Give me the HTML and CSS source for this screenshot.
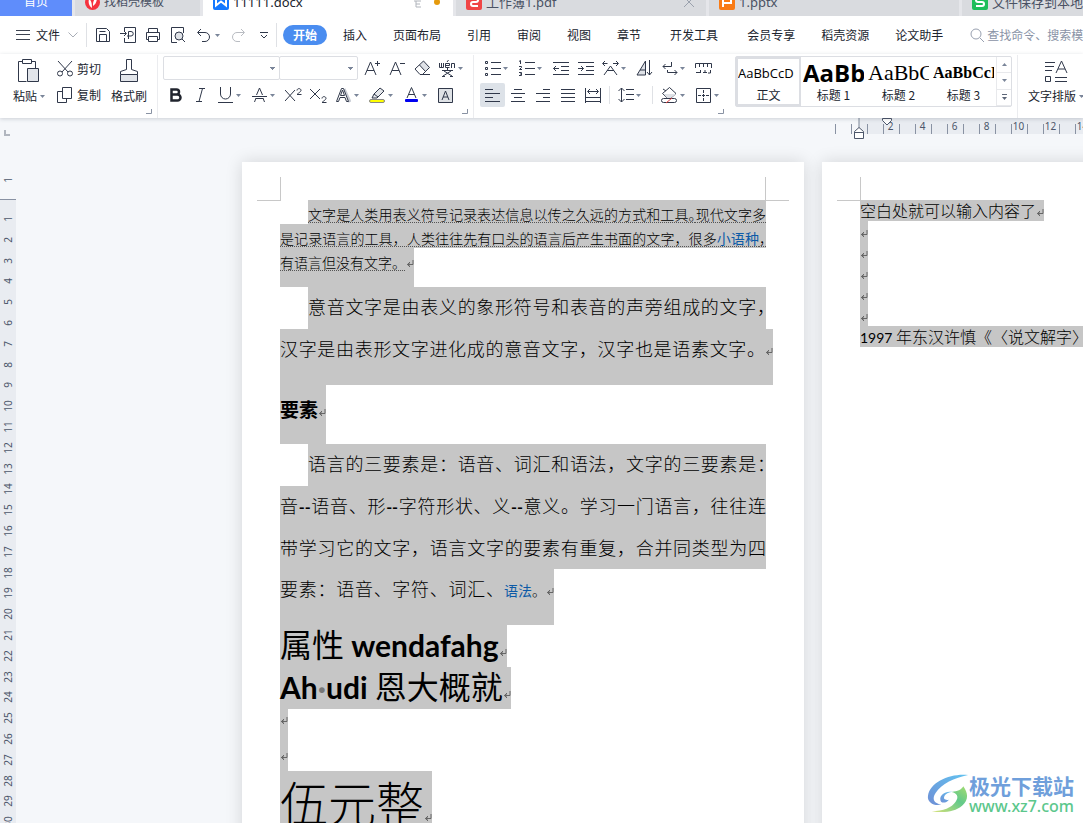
FILE: index.html
```html
<!DOCTYPE html>
<html lang="zh-CN">
<head>
<meta charset="utf-8">
<title>11111.docx</title>
<link rel="stylesheet" href="styles.css">
</head>
<body>
<svg class="defs" aria-hidden="true">
  <symbol id="ret" viewBox="0 0 8 8"><path d="M7 0v4.500H1.500M4 2 1.500 4.500 4 7" fill="none" stroke="#666" stroke-width="1"/><path d="M1 4.500 3.500 2.500v4z" fill="#666"/></symbol>
  <symbol id="caret" viewBox="0 0 5 3"><path d="M0 0h5L2.500 3z" fill="#7a8599"/></symbol>
</svg>

<nav class="tabs" aria-label="文档标签">
  <button class="tab tab-home">首页</button>
  <button class="tab tab-store"><svg width="15" height="15" viewBox="0 0 15 15"><circle cx="7.500" cy="7.500" r="7.500" fill="#f5333f"/><path d="M4 4c2 1 3 4 3 9-3-2-4-5-3-9zM12 2c-3 2-4 4-4 9 3-2 4-5 4-9z" fill="#fff"/></svg>找稻壳模板</button>
  <button class="tab tab-active"><svg width="16" height="16" viewBox="0 0 16 16"><rect width="16" height="16" rx="2" fill="#1478ff"/><path d="M3 4v7.500l5-4 5 4V4" stroke="#fff" stroke-width="2" fill="none"/></svg>11111.docx<svg class="pin" width="8" height="12" viewBox="0 0 8 12"><path d="M0 5h7M2 5v6h5M2 8h4" fill="none" stroke="#b0b4bb"/></svg><i class="dot"></i></button>
  <button class="tab"><svg width="16" height="16" viewBox="0 0 16 16"><rect width="16" height="16" rx="2" fill="#f04545"/><path d="M4 4h6a2 2 0 0 1 0 4H7a2 2 0 0 0 0 4h5" stroke="#fff" stroke-width="2" fill="none"/></svg>工作簿1.pdf<svg class="close" width="10" height="10" viewBox="0 0 10 10"><path d="m0 0 10 10M10 0 0 10" stroke="#9aa1ad"/></svg></button>
  <button class="tab"><svg width="16" height="16" viewBox="0 0 16 16"><rect width="16" height="16" rx="2" fill="#f97b16"/><path d="M4 13V5h8v4H5" stroke="#fff" stroke-width="2" fill="none"/></svg>1.pptx</button>
  <button class="tab"><svg width="16" height="16" viewBox="0 0 16 16"><rect width="16" height="16" rx="2" fill="#1ebe5a"/><path d="M12 4H6a2 2 0 0 0 0 4h4a2 2 0 0 1 0 4H4" stroke="#fff" stroke-width="2" fill="none"/></svg>文件保存到本地.xlsx</button>
</nav>

<header class="menu">
  <button class="file"><svg width="14" height="10" viewBox="0 0 14 10"><path d="M0 .5h14M0 4.500h14M0 9.500h14" stroke="#3c4250"/></svg>文件<svg width="10" height="6" viewBox="0 0 10 6"><path d="m.5.5 4.500 4.500L9.500.5" fill="none" stroke="#a8adb6"/></svg></button>
  <div class="quick">
    <button aria-label="保存"><svg width="16" height="16" viewBox="0 0 16 16"><path d="M1.500 1.500h10l3 3v10h-13zM4.500 14V7.500h7V14M4.500 4.500h6" class="ln"/></svg></button>
    <button aria-label="输出为PDF"><svg width="17" height="16" viewBox="0 0 17 16"><path d="M4.500 4V.5h11v15h-11V11M0 6.500h6M4 4l2.500 2.500L4 9M8.500 12V4.500H11a2 2 0 0 1 0 4.500H7" class="ln"/></svg></button>
    <button aria-label="打印"><svg width="16" height="16" viewBox="0 0 16 16"><path d="M3.500 5V1.500h9V5M3.500 12.500h-2v-7h13v7h-2M3.500 9.500h9v5h-9z" class="ln"/></svg></button>
    <button aria-label="打印预览"><svg width="16" height="16" viewBox="0 0 16 16"><path d="M7 15.500H1.500V.5h12V6" class="ln"/><circle cx="9" cy="9" r="4" fill="#dfe2e7" class="st"/><path d="m12 12 3 3" class="ln"/></svg></button>
    <button class="wide" aria-label="撤销"><svg width="15" height="15" viewBox="0 0 15 15"><path d="M5 1 1.500 4.500 5 8M2 4.500h7a4 4 0 0 1 0 9H6" class="ln"/></svg><svg class="cr" width="5" height="3"><use href="#caret"/></svg></button>
    <button aria-label="恢复"><svg width="15" height="15" viewBox="0 0 15 15"><path d="m10 1 3.500 3.500L10 8M13 4.500H6a4 4 0 0 0 0 9h3" fill="none" stroke="#b9bcc2"/></svg></button>
    <button aria-label="更多"><svg width="8" height="7" viewBox="0 0 8 7"><path d="M0 .5h8M1 3l3 3 3-3" class="ln"/></svg></button>
  </div>
  <nav class="menus" aria-label="功能区">
    <button class="on">开始</button><button>插入</button><button>页面布局</button><button>引用</button><button>审阅</button><button>视图</button><button>章节</button><button class="dev">开发工具</button><button>会员专享</button><button>稻壳资源</button><button>论文助手</button>
  </nav>
  <label class="search"><svg width="15" height="15" viewBox="0 0 15 15"><circle cx="6" cy="6" r="5" fill="none" stroke="#98a0b0"/><path d="m10 10 4 4" stroke="#98a0b0"/></svg><input type="text" placeholder="查找命令、搜索模板" aria-label="查找命令"></label>
</header>

<section class="ribbon">
  <div class="group clip">
    <div class="clip-body">
      <button class="big"><svg width="22" height="24" viewBox="0 0 22 24"><path d="M4.500 2.500h-4v20h8M13.500 2.500h4V9" class="ln"/><path d="M4.500.5h9v4h-9z" class="ln"/><path d="M9.500 9.500h11v13h-11z" fill="#e2e5ea" class="st"/></svg><span class="lab">粘贴<svg width="5" height="3"><use href="#caret"/></svg></span></button>
      <div class="pair">
        <button><svg width="16" height="16" viewBox="0 0 16 16"><path d="m1 0 10 11M15 0 5 11" class="ln"/><circle cx="3" cy="12.500" r="2.500" class="ln"/><circle cx="13" cy="12.500" r="2.500" class="ln"/></svg>剪切</button>
        <button><svg width="16" height="16" viewBox="0 0 16 16"><path d="M5 4.500H.5v11h9V12M5.500.5h9v11h-9z" class="ln"/></svg>复制</button>
      </div>
      <button class="big brush"><svg width="18" height="24" viewBox="0 0 18 24"><path d="M.5 15.500h17v7H.5z" fill="#e2e5ea" class="st"/><path d="M.5 15.500v-3l6-2v-10h5v10l6 2v3" class="ln"/></svg><span class="lab">格式刷</span></button>
    </div>
    <svg class="launch" width="6" height="5" viewBox="0 0 6 5"><path d="M5.500 0v4.500H0" fill="none" stroke="#8992a3"/></svg>
  </div>

  <div class="group font">
    <div class="row">
      <select class="fam" aria-label="字体"><option></option></select><select class="size" aria-label="字号"><option></option></select>
      <button class="t" aria-label="增大字号"><svg width="17" height="16" viewBox="0 0 17 16"><path d="m1 15 5.500-13L12 15M3 10.500h7M11 3.500h5M13.500 1v5" class="ln"/></svg></button>
      <button class="t" aria-label="减小字号"><svg width="17" height="16" viewBox="0 0 17 16"><path d="m1 15 5.500-13L12 15M3 10.500h7M11 3.500h5" class="ln"/></svg></button>
      <button class="t" aria-label="清除格式"><svg width="17" height="16" viewBox="0 0 17 16"><path d="m5.500 5 4-4 6 6.500-4 4z" fill="#dfe2e7"/><path d="m1 9 8.500-8 6 6.500-7 7H6zM5.500 5l6 6.500M6 14.500h10" class="ln"/></svg></button>
      <button class="t d" aria-label="拼音指南"><svg width="17" height="17" viewBox="0 0 17 17"><path d="M.5 3v4.500h4V3M2.500 3v4M6.500 5.500h4v-2h-4v4h4M12.500 8V3.500h3V8M8 2l1.500-2M3 10.500h11M8.500 8v2M5 11l8 5M12 11l-8 5M3 16.500h3M11 16.500h3" class="ln"/></svg><svg class="cr" width="5" height="3"><use href="#caret"/></svg></button>
    </div>
    <div class="row">
      <button class="t" aria-label="加粗"><svg width="13" height="14" viewBox="0 0 13 14"><path d="M2.500 1.500h5a2.500 2.500 0 0 1 0 5h-5zM2.500 6.500h6a3 3 0 0 1 0 6h-6z" fill="none" stroke="#20242e" stroke-width="2.500"/></svg></button>
      <button class="t" aria-label="倾斜"><svg width="10" height="14" viewBox="0 0 10 14"><path d="M3 .5h6M0 13.500h6M6.500.5l-3.500 13" class="ln"/></svg></button>
      <button class="t d" aria-label="下划线"><svg width="15" height="16" viewBox="0 0 15 16"><path d="M2.500 0v7a5 5 0 0 0 10 0V0M0 15.500h15" class="ln"/></svg><svg class="cr" width="5" height="3"><use href="#caret"/></svg></button>
      <button class="t d" aria-label="删除线"><svg width="15" height="16" viewBox="0 0 15 16"><path d="m2.500 15 1.500-4M12.500 15 11 11M4.500 8l3-7 3 7M0 9.500h15M4 11.500h7" class="ln"/></svg><svg class="cr" width="5" height="3"><use href="#caret"/></svg></button>
      <button class="t" aria-label="上标"><svg width="17" height="15" viewBox="0 0 17 15"><path d="m0 2 10 11M10 2 0 13M12 2.500c0-2.500 4-2.500 4 0 0 1-2 2-4 4h4.500" class="ln"/></svg></button>
      <button class="t" aria-label="下标"><svg width="17" height="15" viewBox="0 0 17 15"><path d="m0 1 10 10M10 1 0 11M12 10.500c0-2.500 4-2.500 4 0 0 1-2 2-4 4h4.500" class="ln"/></svg></button>
      <button class="t d" aria-label="文字效果"><svg width="15" height="15" viewBox="0 0 15 15"><path d="m8 1 6 13" stroke="#c8ccd4" stroke-width="3" fill="none"/><path d="m.5 13.500 5-13h2l5 13h-2l-1.500-4H4l-1.500 4zM4.500 7.500h4L6.500 2z" fill="#fff" class="st"/></svg><svg class="cr" width="5" height="3"><use href="#caret"/></svg></button>
      <button class="t d" aria-label="突出显示"><svg width="17" height="17" viewBox="0 0 17 17"><path d="m5 7 6-6 4 3-6 6zM5 7l-2 4h5l1-1" fill="#e4e7eb" class="st"/><rect x=".5" y="12.500" width="15" height="3" rx="1.500" fill="#ffff00" stroke="#888"/></svg><svg class="cr" width="5" height="3"><use href="#caret"/></svg></button>
      <button class="t d" aria-label="字体颜色"><svg width="15" height="16" viewBox="0 0 15 16"><path d="M3 11 7.500.5 12 11M5 7.500h5" class="ln"/><rect x="1" y="12" width="13" height="3" rx="1" fill="#0000f0"/></svg><svg class="cr" width="5" height="3"><use href="#caret"/></svg></button>
      <button class="t" aria-label="字符底纹"><svg width="15" height="15" viewBox="0 0 15 15"><path d="M.5.5h14v14H.5z" fill="#dfe2e6" class="st"/><path d="m4 12 3.500-9L11 12M5 9h5" class="ln"/></svg></button>
    </div>
    <svg class="launch" width="6" height="5" viewBox="0 0 6 5"><path d="M5.500 0v4.500H0" fill="none" stroke="#8992a3"/></svg>
  </div>

  <div class="group para">
    <div class="row">
      <button class="t d" aria-label="项目符号"><svg width="16" height="16" viewBox="0 0 16 16"><path d="M6 2.500h10M6 8.500h10M6 14.500h10M.5 1.500h2v2h-2zM.5 7.500h2v2h-2zM.5 13.500h2v2h-2z" class="ln"/></svg><svg class="cr" width="5" height="3"><use href="#caret"/></svg></button>
      <button class="t d" aria-label="编号"><svg width="16" height="16" viewBox="0 0 16 16"><path d="M6 2.500h10M6 8.500h10M6 14.500h10M0 1.500l1.500-1V4M0 6.500h2.500v1L.5 9.500H3M0 12.500h2.500v3H0M1 14h1" class="ln"/></svg><svg class="cr" width="5" height="3"><use href="#caret"/></svg></button>
      <button class="t" aria-label="减少缩进"><svg width="16" height="14" viewBox="0 0 16 14"><path d="M0 1.500h16M8 5.500h8M8 9.500h8M0 13.500h16M6 7.500H.5M3 5 .5 7.500 3 10" class="ln"/></svg></button>
      <button class="t" aria-label="增加缩进"><svg width="16" height="14" viewBox="0 0 16 14"><path d="M0 1.500h16M8 5.500h8M8 9.500h8M0 13.500h16M0 7.500h5.500M3 5l2.500 2.500L3 10" class="ln"/></svg></button>
      <button class="t d" aria-label="中文版式"><svg width="17" height="16" viewBox="0 0 17 16"><path d="m2 15 6.500-9L15 15M5 10.500h7M5.500 3.500H1M3 1 .5 3.500 3 6M11 3.500h5M14 1l2.500 2.500L14 6" class="ln"/></svg><svg class="cr" width="5" height="3"><use href="#caret"/></svg></button>
      <button class="t" aria-label="排序"><svg width="17" height="16" viewBox="0 0 17 16"><path d="M9.500 1v14H1zM4 10h5" fill="#dfe2e7" class="st"/><path d="M13.500 0v15M11 12l2.500 3 2.500-3" class="ln"/></svg></button>
      <button class="t d" aria-label="显示段落标记"><svg width="16" height="15" viewBox="0 0 16 15"><path d="M9.500 1v4.500H1M3.500 3 1 5.500 3.500 8M5.500 9v2.500H15M12.500 9l2.500 2.500-2.500 2.500" class="ln"/></svg><svg class="cr" width="5" height="3"><use href="#caret"/></svg></button>
      <button class="t" aria-label="制表位"><svg width="17" height="12" viewBox="0 0 17 12"><path d="M.5 6V1.500h16V6M4.500 1.500V5M8.500 1.500V5M12.500 1.500V5M1 10.500h4M5.500 8v3M8 10.500h4M10 8v3M15.500 8v3H13" class="ln"/></svg></button>
    </div>
    <div class="row">
      <button class="t on" aria-label="左对齐"><svg width="15" height="14" viewBox="0 0 15 14"><path d="M0 1.500h8M0 5.500h15M0 9.500h8M0 13.500h15" class="ln"/></svg></button>
      <button class="t" aria-label="居中"><svg width="14" height="14" viewBox="0 0 14 14"><path d="M3 1.500h8M0 5.500h14M3 9.500h8M0 13.500h14" class="ln"/></svg></button>
      <button class="t" aria-label="右对齐"><svg width="14" height="14" viewBox="0 0 14 14"><path d="M7 1.500h7M0 5.500h14M7 9.500h7M0 13.500h14" class="ln"/></svg></button>
      <button class="t" aria-label="两端对齐"><svg width="14" height="14" viewBox="0 0 14 14"><path d="M0 1.500h14M0 5.500h14M0 9.500h14M0 13.500h14" class="ln"/></svg></button>
      <button class="t" aria-label="分散对齐"><svg width="16" height="15" viewBox="0 0 16 15"><path d="M.5 0v15M15.500 0v15M3 3.500h10M5 1 2.500 3.500 5 6M11 1l2.500 2.500L11 6M1 9.500h14M1 13.500h14" class="ln"/></svg></button>
      <i class="sep"></i>
      <button class="t d" aria-label="行距"><svg width="16" height="16" viewBox="0 0 16 16"><path d="M3.500 1v14M.5 4l3-3 3 3M.5 12l3 3 3-3M8 2.500h8M8 7.500h8M8 12.500h8" class="ln"/></svg><svg class="cr" width="5" height="3"><use href="#caret"/></svg></button>
      <i class="sep last"></i>
      <button class="t d" aria-label="底纹颜色"><svg width="17" height="17" viewBox="0 0 17 17"><path d="m1.500 6.500 7-6 6.500 6-5 4.500H6z" fill="#fff" class="st"/><path d="M2.500 7H15l-5 4H6z" fill="#dfe2e7"/><path d="m5 4-3-2" class="ln"/><rect x=".5" y="11.500" width="15" height="4" rx="2" fill="#fff" class="st"/><path d="m5 16 6-5" stroke="#e04040"/></svg><svg class="cr" width="5" height="3"><use href="#caret"/></svg></button>
      <button class="t d" aria-label="边框"><svg width="15" height="15" viewBox="0 0 15 15"><path d="M.5.5h14v14H.5z" class="ln"/><path d="M7.500 2v11M2 7.500h11" class="ln" stroke-dasharray="3 1"/></svg><svg class="cr" width="5" height="3"><use href="#caret"/></svg></button>
    </div>
    <svg class="launch" width="6" height="5" viewBox="0 0 6 5"><path d="M5.500 0v4.500H0" fill="none" stroke="#8992a3"/></svg>
  </div>

  <div class="styles">
    <button class="style sel"><span class="pv pv0">AaBbCcD</span><span>正文</span></button>
    <button class="style"><span class="pv pv1">AaBb</span><span>标题 1</span></button>
    <button class="style"><span class="pv pv2">AaBbC</span><span>标题 2</span></button>
    <button class="style"><span class="pv pv3">AaBbCcI</span><span>标题 3</span></button>
    <div class="scroll">
      <button aria-label="上一行"><svg class="up" width="5" height="3"><use href="#caret"/></svg></button>
      <button aria-label="下一行"><svg width="5" height="3"><use href="#caret"/></svg></button>
      <button aria-label="展开"><svg width="5" height="6" viewBox="0 0 5 6"><path d="M0 .5h5" stroke="#5c6678"/><path d="M0 3h5L2.500 6z" fill="#5c6678"/></svg></button>
    </div>
  </div>
  <div class="layout">
    <button class="big"><svg width="24" height="24" viewBox="0 0 24 24"><path d="M1 3.500h10M1 7.500h9M1 11.500h7M11 22.500h12M11 18.500h12M1.500 17.500h5v5h-5zM12 14l5.500-12L23 14M14 10h7" class="ln"/></svg><span class="lab">文字排版<svg width="5" height="3"><use href="#caret"/></svg></span></button>
  </div>
</section>

<main class="work">
  <aside class="vruler" aria-hidden="true">
    <div class="vtop"><svg width="6" height="6" viewBox="0 0 6 6"><path d="M1 0v5h5" fill="none" stroke="#b1b6bf" stroke-width="2"/></svg><span>1</span></div>
    <div class="vnums"><span>1</span><span>2</span><span>3</span><span>4</span><span>5</span><span>6</span><span>7</span><span>8</span><span>9</span><span>10</span><span>11</span><span>12</span><span>13</span><span>14</span><span>15</span><span>16</span><span>17</span><span>18</span><span>19</span><span>20</span><span>21</span><span>22</span><span>23</span><span>24</span><span>25</span><span>26</span><span>27</span><span>28</span><span>29</span><span>30</span></div>
  </aside>
  <div class="canvas">
    <div class="hruler" aria-hidden="true">
      <div class="hpre"><i></i><i></i></div>
      <div class="hband">
        <svg class="mark-l" width="10" height="22" viewBox="0 0 10 22"><path d="M5 0v10" stroke="#7d8799"/><path d="M.5 13.500 5 9.500l4.500 4v7h-9zM.5 14.500h9" fill="#fff" stroke="#4c566a"/></svg>
        <svg class="mark-i" width="10" height="8" viewBox="0 0 10 8"><path d="M.5.5h9v2L5 7 .5 2.500z" fill="#fff" stroke="#4c566a"/></svg>
        <span>2</span><span>4</span><span>6</span><span>8</span><span>10</span><span>12</span><span>14</span>
      </div>
    </div>
    <div class="pages">
      <article class="page one">
        <div class="margin"><i class="c tl"></i><i class="c tr"></i></div>
        <p class="l s24 in sm fill"><span class="hl"><u>文字是人类用表义符号记录表达信息以传之久远的方式和工具<b class="half">。</b>现代文字多</u></span></p>
        <p class="l s24 sm fill"><span class="hl"><u>是记录语言的工具，人类往往先有口头的语言后产生书面的文字，很多<a href="#">小语种</a><b class="half">，</b></u></span></p>
        <p class="l s39 sm"><span class="hl"><u>有语言但没有文字。</u><svg class="ret"><use href="#ret"/></svg></span></p>
        <p class="l s42 in md fill"><span class="hl">意音文字是由表义的象形符号和表音的声旁组成的文字<b class="half">，</b></span></p>
        <p class="l s56 md over"><span class="hl"><span class="full">汉字是由表形文字进化成的意音文字，汉字也是语素文字。</span><svg class="ret"><use href="#ret"/></svg></span></p>
        <h4 class="l s59"><span class="hl">要素<svg class="ret"><use href="#ret"/></svg></span></h4>
        <p class="l s42 in md fill"><span class="hl">语言的三要素是：语音、词汇和语法，文字的三要素是<b class="half">：</b></span></p>
        <p class="l s42 md fill"><span class="hl">音<b>--</b>语音、形<b>--</b>字符形状、义<b>--</b>意义。学习一门语言，往往连</span></p>
        <p class="l s41 md fill"><span class="hl">带学习它的文字，语言文字的要素有重复，合并同类型为四</span></p>
        <p class="l s56 md"><span class="hl"><span class="part">要素：语音、字符、词汇、</span><a href="#">语法</a><small>。</small><svg class="ret"><use href="#ret"/></svg></span></p>
        <h2 class="l s42"><span class="hl">属性 <b>wendafahg</b><svg class="ret"><use href="#ret"/></svg></span></h2>
        <h2 class="l s42"><span class="hl"><b>Ah<i>·</i>udi</b> 恩大概就<svg class="ret"><use href="#ret"/></svg></span></h2>
        <p class="l s31"><span class="hl"><svg class="ret"><use href="#ret"/></svg></span></p>
        <p class="l s31"><span class="hl low"><svg class="ret"><use href="#ret"/></svg></span></p>
        <h1 class="l s62"><span class="hl">伍元整<svg class="ret"><use href="#ret"/></svg></span></h1>
      </article>
      <article class="page two">
        <div class="margin"><i class="c tl"></i></div>
        <p class="l s21"><span class="hl">空白处就可以输入内容了<svg class="ret"><use href="#ret"/></svg></span></p>
        <p class="l s21"><span class="hl"><svg class="ret"><use href="#ret"/></svg></span></p>
        <p class="l s21"><span class="hl"><svg class="ret"><use href="#ret"/></svg></span></p>
        <p class="l s21"><span class="hl"><svg class="ret"><use href="#ret"/></svg></span></p>
        <p class="l s21"><span class="hl"><svg class="ret"><use href="#ret"/></svg></span></p>
        <p class="l s21"><span class="hl"><svg class="ret"><use href="#ret"/></svg></span></p>
        <p class="l s21"><span class="hl"><b>1997</b> 年东汉许慎《〈说文解字〉</span></p>
      </article>
    </div>
  </div>
</main>

<div class="watermark">
  <svg width="42" height="42" viewBox="0 0 42 44">
    <defs><linearGradient id="wb" x1="0" y1="1" x2="1" y2="0"><stop offset="0" stop-color="#6f8fd6"/><stop offset="1" stop-color="#62c3f0"/></linearGradient><linearGradient id="wg" x1="0" y1="1" x2="1" y2="0"><stop offset="0" stop-color="#d9e27a"/><stop offset=".6" stop-color="#62c98a"/><stop offset="1" stop-color="#a4dc70"/></linearGradient></defs>
    <path d="M42 2C24 0 2 9 0 24c-1 7 7 11 14 9C6 32 4 27 8 21 14 11 28 5 42 2z" fill="url(#wb)"/>
    <path d="M26 20c-7-2-14 3-13 8 0 4 6 4 9 0-4 1-6-1-5-3 1-3 5-5 9-5z" fill="url(#wb)"/>
    <path d="M37 14c5 7 6 14-1 20-8 7-20 8-32 6 12 0 21-4 25-10 4-5 1-9-4-10 6-1 10-2 12-6z" fill="url(#wg)"/>
  </svg>
  <div><strong>极光下载站</strong><span>www.xz7.com</span></div>
</div>
</body>
</html>
```

FILE: styles.css
```css
* { box-sizing: border-box; }
body {
  margin: 0;
  height: 100vh;
  display: flex;
  flex-direction: column;
  overflow: hidden;
  position: relative;
  background: #f5f7fa;
  font: 12px/16px "Noto Sans CJK SC", sans-serif;
  color: #20242e;
}
button {
  border: 0;
  padding: 0;
  background: none;
  font: inherit;
  color: inherit;
  white-space: nowrap;
}
svg { flex: none; }
p, h1, h2, h4 { margin: 0; }
.defs { position: absolute; width: 0; height: 0; }
.ln { fill: none; stroke: #30384a; }
.st { stroke: #30384a; }

/* document tabs */
.tabs {
  display: flex;
  align-items: flex-end;
  gap: 3px;
  height: 16px;
  flex: none;
  overflow: hidden;
  background: #e5e6ea;
}
.tab {
  display: flex;
  align-items: center;
  gap: 4px;
  flex: none;
  width: 250px;
  height: 28px;
  padding: 0 10px;
  background: #d9dbdf;
  color: #4a5264;
  font: 13px/20px "Noto Sans", "Noto Sans CJK SC", sans-serif;
}
.tab-home { width: 72px; justify-content: center; background: #5f8dfb; color: #fff; font-size: 12px; }
.tab-store { width: 125px; font-size: 12px; }
.tab-active { background: #fff; color: #20242e; }
.pin { margin-left: auto; }
.dot { width: 6px; height: 6px; margin: 0 3px 0 8px; border-radius: 3px; background: #e59a0c; }
.close { margin: 0 2px 0 auto; }

/* menu bar */
.menu {
  display: flex;
  align-items: center;
  flex: none;
  height: 38px;
  background: #fff;
}
.file { display: flex; align-items: center; gap: 6px; padding: 0 8px 0 16px; height: 24px; border-right: 1px solid #dfe1e5; }
.file svg:last-child { margin-left: 2px; }
.quick { display: flex; align-items: center; width: 190px; height: 24px; flex: none; padding-left: 4px; border-right: 1px solid #dfe1e5; }
.quick button { width: 25px; height: 24px; display: flex; align-items: center; justify-content: center; }
.quick .wide { width: 36px; gap: 4px; }
.menus { display: flex; align-items: center; margin-left: 6px; gap: 26px; }
.menus .on { width: 44px; height: 20px; margin-right: -10px; border-radius: 10px; background: #4a8df0; color: #fff; font-weight: 700; }
.menus .dev { margin: 0 3px; }
.search { display: flex; align-items: center; gap: 2px; flex: 1; min-width: 0; margin-left: 27px; }
.search input { flex: 1; min-width: 0; padding: 0; border: 0; outline: 0; font: inherit; }
.search input::placeholder { color: #8a93a6; opacity: 1; }

/* ribbon */
.ribbon {
  display: flex;
  flex: none;
  height: 64px;
  padding-top: 1px;
  background: #fff;
  box-shadow: 0 1px 4px rgba(40, 50, 70, .2);
  position: relative;
  z-index: 2;
}
.group { display: flex; flex-direction: column; justify-content: space-between; flex: none; padding-bottom: 4px; border-right: 1px solid #ebecef; }
.launch { align-self: flex-end; margin-right: 5px; }
.clip { width: 158px; }
.clip-body { display: flex; height: 54px; padding-left: 13px; }
.big { display: flex; flex-direction: column; align-items: center; justify-content: space-between; padding: 4px 0 5px; line-height: 16px; height: 54px; }
.lab { display: flex; align-items: center; gap: 3px; }
.pair { display: flex; flex-direction: column; justify-content: space-between; padding: 4px 10px 4px 12px; }
.pair button { display: flex; align-items: center; gap: 4px; height: 20px; }
.font { width: 316px; padding-left: 5px; }
.para { width: 255px; padding-left: 6px; border: 0; }
.row { display: flex; align-items: center; height: 26px; }
.row select {
  appearance: none;
  height: 24px;
  border: 1px solid #dcdee3;
  border-radius: 2px;
  background: linear-gradient(#7a8599, #7a8599) right 4px top 10px / 5px 1px no-repeat, linear-gradient(#7a8599, #7a8599) right 5px top 11px / 3px 1px no-repeat, linear-gradient(#7a8599, #7a8599) right 6px top 12px / 1px 1px no-repeat #fff;
}
.fam { width: 117px; }
.row .size { width: 79px; margin: 0 2px 0 -1px; }
.t { position: relative; display: flex; align-items: center; justify-content: center; flex: none; width: 25px; height: 24px; }
.t.d { width: 34px; padding-right: 9px; }
.t.d .cr { position: absolute; right: 6px; top: 11px; }
.t.on { background: #dde2e8; border-radius: 2px; }
.sep { width: 1px; height: 18px; margin: 0 3px 0 4px; background: #dfe1e5; }
.sep.last { margin: 0 4px 0 5px; }
.styles { display: flex; flex: none; width: 277px; height: 51px; margin: 1px 5px 0 6px; border: 1px solid #dcdee3; border-radius: 2px; }
.style { width: 65px; display: flex; flex-direction: column; align-items: center; justify-content: space-between; padding: 0 2px 3px; }
.style.sel { border: 2px solid #dcdee3; padding: 0 0 1px; }
.style span:last-child { line-height: 16px; }
.pv { display: block; width: 100%; height: 29px; overflow: hidden; line-height: 32px; text-align: left; color: #000; }
.pv0 { font-family: "Open Sans", sans-serif; font-size: 13px; line-height: 28px; }
.pv1 { font-family: "Open Sans", sans-serif; font-size: 24px; font-weight: 700; }
.pv2 { font-family: "Liberation Serif", serif; font-size: 22px; }
.pv3 { font-family: "Liberation Serif", serif; font-size: 16px; font-weight: 700; }
.scroll { display: grid; grid-template-rows: repeat(3, 1fr); flex: 1; }
.scroll button { display: flex; align-items: center; justify-content: center; border: 0 solid #e8e9ec; border-width: 0 0 1px 1px; }
.up { transform: scaleY(-1); }
.layout { flex: 1; min-width: 0; padding-left: 10px; border-left: 1px solid #ebecef; overflow: hidden; }

/* rulers */
.work { display: flex; flex: 1; min-height: 0; overflow: hidden; }
.vruler { width: 16px; flex: none; color: #4c566a; font: 10px/16px "Noto Sans", sans-serif; }
.vruler span { writing-mode: vertical-rl; transform: rotate(180deg); width: 16px; text-align: center; }
.vtop { display: flex; flex-direction: column; justify-content: space-between; height: 82px; padding: 12px 0 16px; border-bottom: 1px solid #8992a3; }
.vtop svg { margin-left: 4px; }
.vnums { display: grid; grid-auto-rows: 1fr; height: 643px; padding: 9px 0 10px; background: #e9ecf1; }
.canvas { flex: 1; min-width: 0; overflow: hidden; }
.hruler { display: flex; height: 16px; padding-left: 819px; }
.hpre { display: flex; width: 24px; flex: none; gap: 15px; align-items: flex-end; }
.hpre i { width: 1px; height: 10px; background: #8992a3; }
.hband { position: relative; display: flex; align-items: flex-end; flex: 1; min-width: 0; padding-left: 8px; background: #e9ecf1; color: #4c566a; font: 10px/10px "Noto Sans", sans-serif; }
.hband span { flex: none; width: 32px; height: 10px; padding: 0 2px 0 16px; line-height: 4px; text-align: center; border-left: 1px solid #8992a3; background: linear-gradient(#8992a3, #8992a3) 15px 0 / 1px 10px no-repeat; }
.mark-l { position: absolute; left: -5px; top: 0; }
.mark-i { position: absolute; left: 23px; top: 0; }

/* pages */
.pages { display: flex; gap: 18px; padding: 28px 0 0 226px; }
.page { flex: none; width: 562px; height: 794px; padding: 0 38px; background: #fff; box-shadow: 0 0 16px rgba(0, 0, 0, .14); }
.margin { display: flex; justify-content: space-between; height: 38px; margin: 0 -23px; padding-top: 15px; }
.c { width: 24px; height: 24px; border: solid #c8c8c8; border-width: 0 1px 1px 0; }
.c.tr { border-width: 0 0 1px 1px; }
.l { display: flex; white-space: nowrap; font: 300 16px/20px "Noto Sans CJK SC", sans-serif; color: #000; }
.in { padding-left: 28px; }
.hl { background: #c6c6c6; display: block; height: 100%; }
.fill .hl { flex: 1; min-width: 0; white-space: normal; text-align: justify; text-align-last: justify; }
.ret { width: 8px; height: 8px; }
.half { font-weight: inherit; font-feature-settings: "halt"; }
.l a { color: #0d5aa7; text-decoration: none; font-weight: 400; }
.s21 { height: 21px; }
.s24 { height: 24px; }
.s31 { height: 31px; }
.s39 { height: 39px; }
.s41 { height: 41px; }
.s42 { height: 42px; }
.s56 { height: 56px; }
.s59 { height: 59px; }
.s62 { height: 62px; }
.sm { font-size: 14px; line-height: 28px; }
.sm u { text-decoration: underline dotted 1px #555; text-underline-offset: 2px; }
.md { font-size: 18px; line-height: 38px; }
.md a, .md small { font-size: 14px; }
.md b:not(.half) { font: 700 16px/38px Lato, sans-serif; }
.over .hl { margin-right: -8px; }
.full, .part { display: inline-block; height: 38px; text-align: justify; text-align-last: justify; vertical-align: top; }
.full { width: 485px; }
.part { width: 224px; }
h4.l { font-size: 19px; font-weight: 700; line-height: 48px; }
h2.l { font-size: 32px; font-weight: 400; line-height: 36px; }
h2 b { font: 700 30px/36px Lato, sans-serif; }
h2 i { font-style: normal; color: #777; }
h1.l { font-size: 48px; line-height: 60px; }
.s31 .hl { line-height: 18px; }
.s31 .low { line-height: 28px; }
.two .l { text-spacing-trim: space-all; }
.two b { font: 400 14px/20px Lato, sans-serif; }

/* site mark */
.watermark { position: absolute; right: 9px; bottom: 8px; display: flex; align-items: center; z-index: 3; }
.watermark div { display: flex; flex-direction: column; }
.watermark strong { font-size: 21px; line-height: 24px; color: #6f9fdb; }
.watermark span { font: 500 16px/18px "Noto Sans", sans-serif; color: #5cc78c; }
```
